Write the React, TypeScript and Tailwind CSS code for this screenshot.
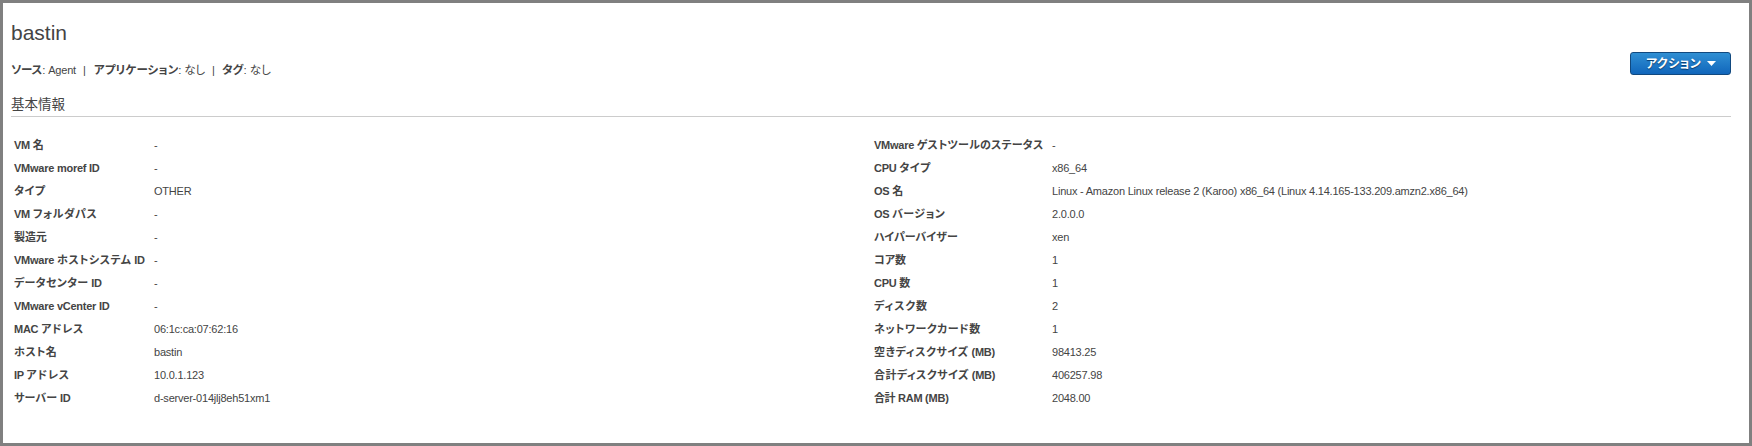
type Row = { label: string; value: string; kana?: string };

const left: Row[] = [
  { label: 'VM 名', value: '-' },
  { label: 'VMware moref ID', value: '-' },
  { label: 'タイプ', value: 'OTHER', kana: 'tracking-[0.5px]' },
  { label: 'VM フォルダパス', value: '-', kana: 'tracking-[0.5px]' },
  { label: '製造元', value: '-', kana: 'tracking-[-0.1px]' },
  { label: 'VMware ホストシステム ID', value: '-', kana: 'tracking-[0.5px]' },
  { label: 'データセンター ID', value: '-', kana: 'tracking-[0.3px]' },
  { label: 'VMware vCenter ID', value: '-' },
  { label: 'MAC アドレス', value: '06:1c:ca:07:62:16', kana: 'tracking-[0.6px]' },
  { label: 'ホスト名', value: 'bastin', kana: 'tracking-[0.4px]' },
  { label: 'IP アドレス', value: '10.0.1.123', kana: 'tracking-[0.7px]' },
  { label: 'サーバー ID', value: 'd-server-014jlj8eh51xm1', kana: 'tracking-[0.15px]' },
];

const right: Row[] = [
  { label: 'VMware ゲストツールのステータス', value: '-', kana: 'tracking-[0.17px]' },
  { label: 'CPU タイプ', value: 'x86_64', kana: 'tracking-[0.4px]' },
  { label: 'OS 名', value: 'Linux - Amazon Linux release 2 (Karoo) x86_64 (Linux 4.14.165-133.209.amzn2.x86_64)' },
  { label: 'OS バージョン', value: '2.0.0.0', kana: 'tracking-[0.4px]' },
  { label: 'ハイパーバイザー', value: 'xen' },
  { label: 'コア数', value: '1' },
  { label: 'CPU 数', value: '1' },
  { label: 'ディスク数', value: '2', kana: 'tracking-[0.85px]' },
  { label: 'ネットワークカード数', value: '1', kana: 'tracking-[0.5px]' },
  { label: '空きディスクサイズ (MB)', value: '98413.25', kana: 'tracking-[0.54px]' },
  { label: '合計ディスクサイズ (MB)', value: '406257.98', kana: 'tracking-[0.4px]' },
  { label: '合計 RAM (MB)', value: '2048.00', kana: 'tracking-[-0.4px]' },
];

/* Latin and Japanese runs are spaced separately. */
function Label({ text, kana = 'tracking-normal' }: { text: string; kana?: string }) {
  const runs = text.match(/[\x20-\x7e]+|[^\x20-\x7e]+/g) ?? [];
  return (
    <>
      {runs.map((run, i) => (
        <span key={i} className={/^[\x20-\x7e]/.test(run) ? 'tracking-[-0.25px]' : kana}>{run}</span>
      ))}
    </>
  );
}

function Details({ rows, labelWidth }: { rows: Row[]; labelWidth: string }) {
  return (
    <dl className="text-[11px] text-[#444]">
      {rows.map((r) => (
        <div key={r.label} className="flex h-[23px] items-center whitespace-nowrap leading-[23px]">
          <dt className={`${labelWidth} shrink-0 whitespace-pre font-bold`}>
            <Label text={r.label} kana={r.kana} />
          </dt>
          <dd className="tracking-[-0.215px]">{r.value}</dd>
        </div>
      ))}
    </dl>
  );
}

export default function App() {
  return (
    <main className="h-[446px] w-[1752px] overflow-hidden border-[3px] border-[#808080] bg-white pl-2 pr-[18px] font-['Liberation_Sans','Noto_Sans_CJK_JP',sans-serif] text-[#444] [font-feature-settings:'palt']">
      <header className="flex h-[88px] justify-between">
        <div>
          <h1 className="mt-[16px] h-[28px] text-[21px] leading-[28px]">bastin</h1>
          <p className="mt-[13px] flex h-[20px] items-center whitespace-nowrap text-[11.5px] leading-[20px]">
            <span className="w-[66px] tracking-[-0.2px]"><b>ソース</b>: <span className="text-[11px]">Agent</span></span>
            <span className="w-[17px] pl-[6px] text-[11px]">|</span>
            <span className="w-[112px]"><b className="tracking-[0.1px]">アプリケーション</b><span className="tracking-[-0.2px]">: なし</span></span>
            <span className="w-[16px] pl-[6px] text-[11px]">|</span>
            <span><b>タグ</b>: なし</span>
          </p>
        </div>
        <button className="mt-[49px] flex h-[23px] w-[101px] items-center rounded-[3px] border border-[#11497f] bg-linear-to-b from-[#2f8fd3] to-[#1166bb] pl-[15px] text-[12px] font-bold leading-[20px] text-white [text-shadow:0_1px_1px_#0a3a6b]">
          <span className="w-[61px] text-left tracking-[0.4px]">アクション</span>
          <svg width="9" height="5" viewBox="0 0 9 5" fill="white"><path d="M0 0H9L4.5 5Z" /></svg>
        </button>
      </header>
      <h2 className="flex h-[26px] items-center border-b border-[#ccc] pt-[2px] text-[13.5px] leading-[24px]">基本情報</h2>
      <section className="grid grid-cols-[860px_1fr] pl-[3px] pt-[17px]">
        <Details rows={left} labelWidth="w-[140px]" />
        <Details rows={right} labelWidth="w-[178px]" />
      </section>
    </main>
  );
}
